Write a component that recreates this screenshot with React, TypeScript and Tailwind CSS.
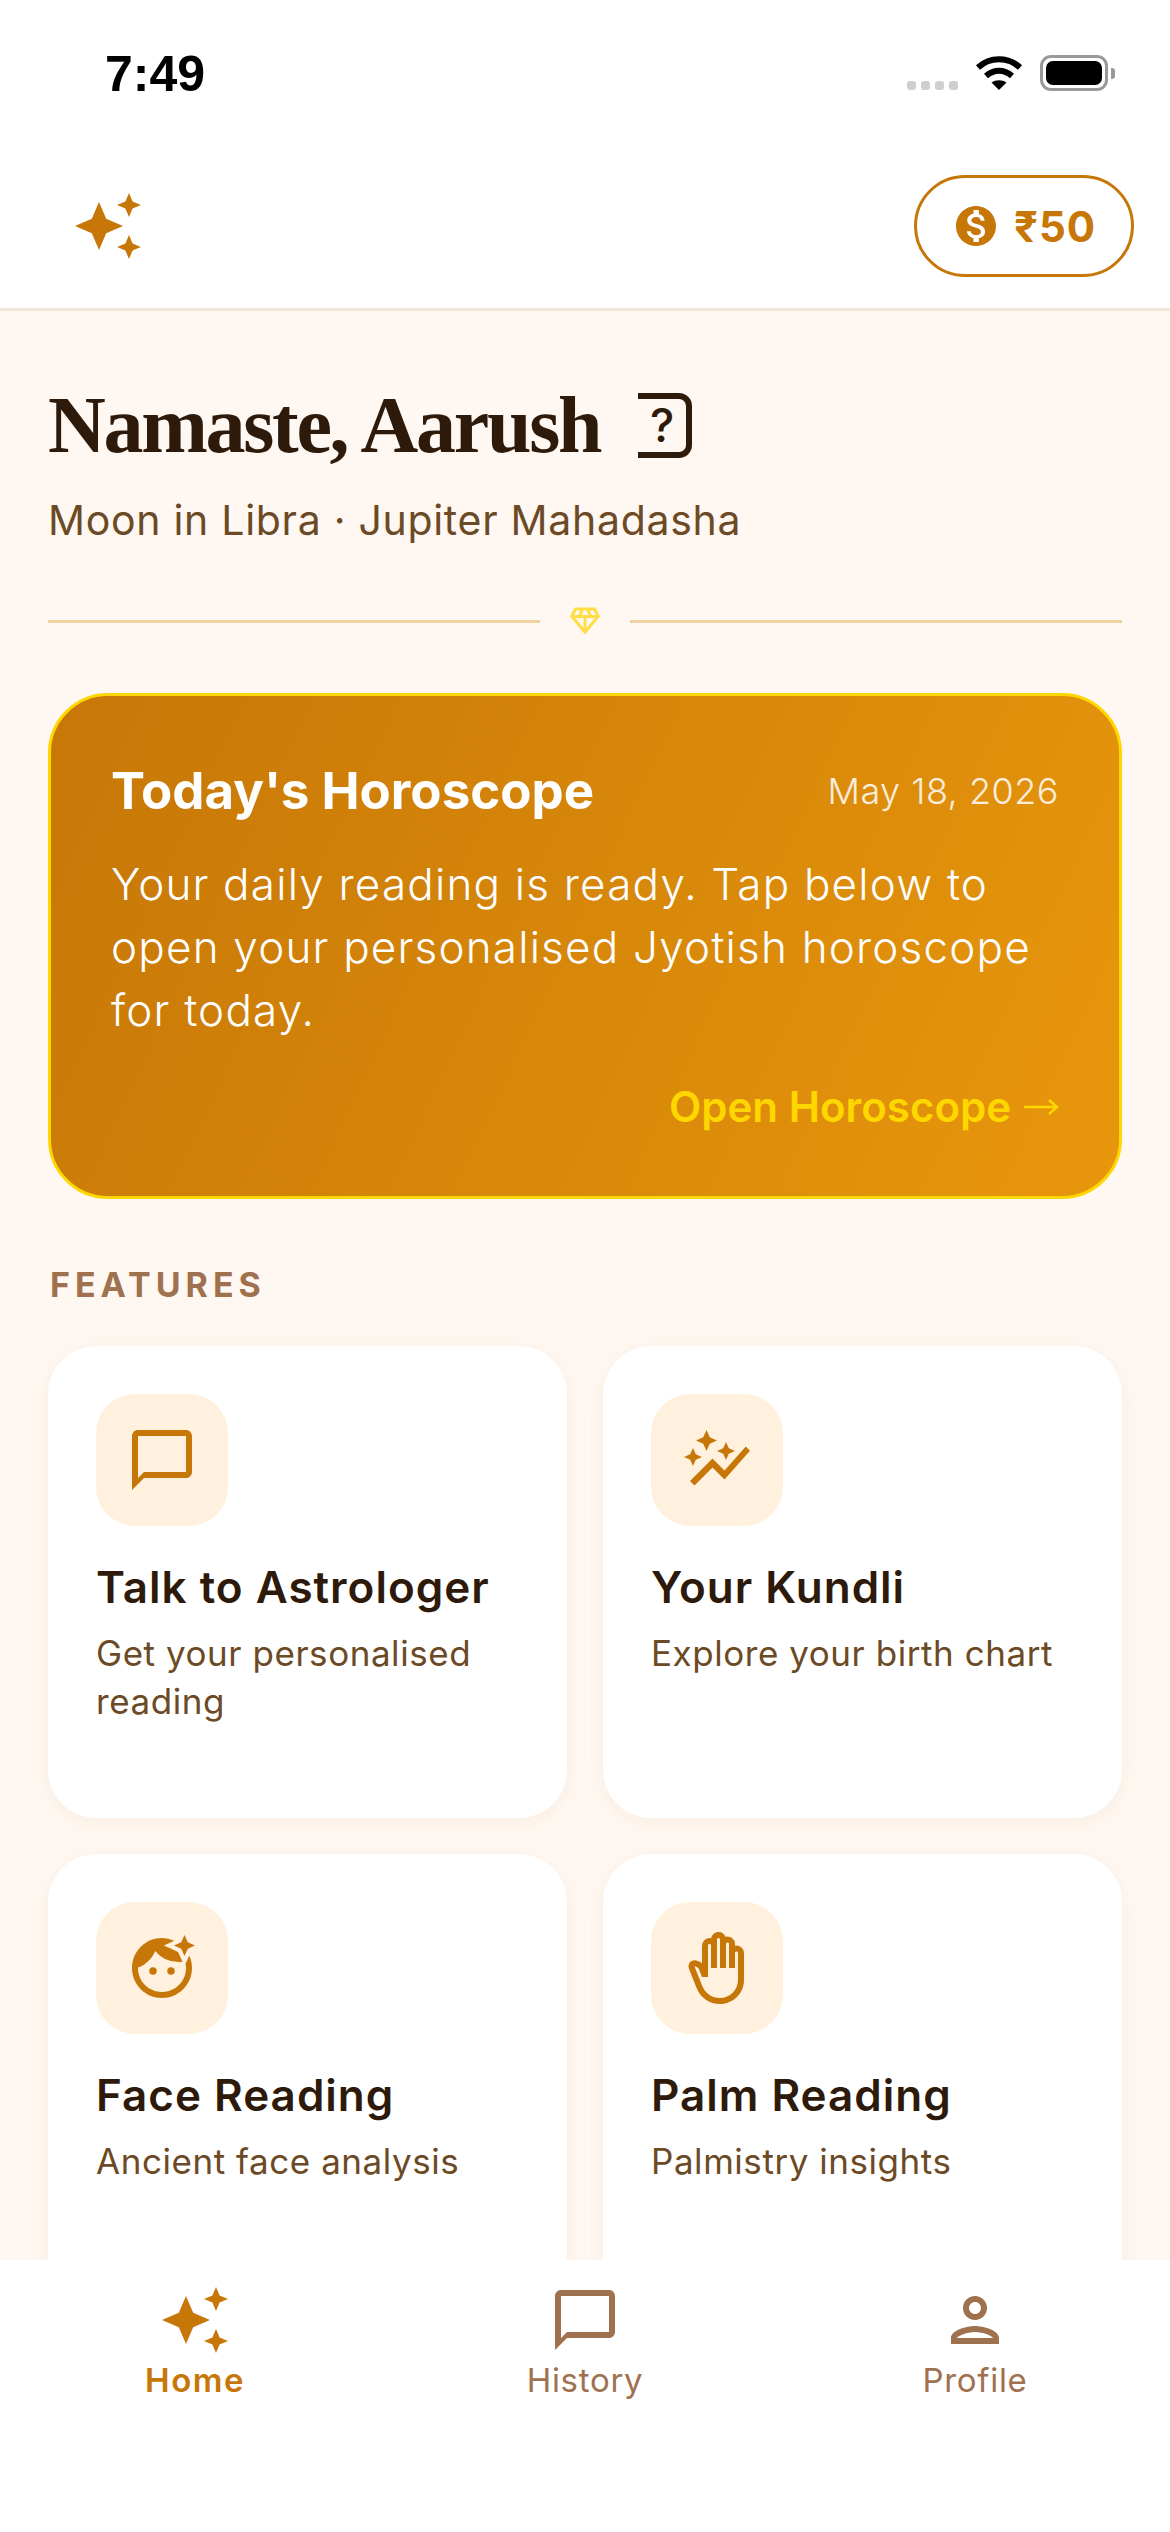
import {
    MdFaceRetouchingNatural,
    MdMonetizationOn,
    MdOutlineAutoGraph,
    MdOutlineBackHand,
    MdOutlineChatBubbleOutline,
    MdOutlineDiamond,
    MdOutlinePerson,
} from "react-icons/md";
import type { ComponentType, ReactNode } from "react";

const sans = "font-['Inter','Liberation_Sans',sans-serif]";

// four point star centred on cx, cy
function star(cx: number, cy: number, r: number) {
    const k = r * 0.3;
    return `M${cx} ${cy - r}L${cx + k} ${cy - k}L${cx + r} ${cy}L${cx + k} ${cy + k}L${cx} ${cy + r}L${cx - k} ${cy + k}L${cx - r} ${cy}L${cx - k} ${cy - k}Z`;
}

function Sparkles({ className }: { className?: string }) {
    return (
        <svg viewBox="0 0 72 72" className={className} fill="currentColor">
            <path d={star(27, 36, 24)} />
            <path d={star(57, 15, 12)} />
            <path d={star(57, 57, 12)} />
        </svg>
    );
}

function StatusBar() {
    return (
        <div className="h-[144px] bg-white flex items-start justify-between pl-[105px] pr-[55px]">
            <span className="mt-[45px] text-[50px] leading-[58px] font-semibold text-black font-['Liberation_Sans',sans-serif]">7:49</span>
            <div className="flex items-end gap-[17px] mt-[55px]">
                <div className="flex gap-[5px] mb-[1px]">
                    <div className="size-[9px] rounded-[3px] bg-[#cfcfcf]" />
                    <div className="size-[9px] rounded-[3px] bg-[#cfcfcf]" />
                    <div className="size-[9px] rounded-[3px] bg-[#cfcfcf]" />
                    <div className="size-[9px] rounded-[3px] bg-[#cfcfcf]" />
                </div>
                <svg viewBox="0 0 48 36" className="w-[48px] h-[36px]" fill="none" stroke="#000" strokeWidth="6">
                    <path d="M3 12.5C15 1.5 33 1.5 45 12.5" />
                    <path d="M11 21C19 14 29 14 37 21" />
                    <path d="M24 35L16.5 27.5C21 24.5 27 24.5 31.5 27.5Z" fill="#000" stroke="none" />
                </svg>
                <div className="flex items-center gap-[3px]">
                    <div className="w-[68px] h-[36px] rounded-[11px] border-[3px] border-[#999] p-[3px]">
                        <div className="size-full rounded-[7px] bg-black" />
                    </div>
                    <div className="w-[4px] h-[11px] rounded-r-[3px] bg-[#999]" />
                </div>
            </div>
        </div>
    );
}

function Feature({ icon: Icon, title, desc }: { icon: ComponentType<{ size?: number }>; title: string; desc: string }) {
    return (
        <div className="h-[472px] rounded-[48px] bg-white pt-[48px] px-[48px] shadow-[0_4px_24px_rgba(150,90,30,0.07)]">
            <div className="size-[132px] rounded-[39px] bg-[#FFF1DE] text-[#C77708] flex items-center justify-center">
                <Icon size={72} />
            </div>
            <h3 className="mt-[31px] text-[44px] leading-[60px] font-semibold text-[#2E1A0A] tracking-[1px]">{title}</h3>
            <p className="mt-[12px] text-[35px] leading-[48px] text-[#6B4A25] tracking-[0.55px]">{desc}</p>
        </div>
    );
}

function NavItem({ label, active, children }: { label: string; active?: boolean; children: ReactNode }) {
    return (
        <div className={`flex flex-col items-center ${active ? "text-[#C77708]" : "text-[#A0714F]"}`}>
            {children}
            <span className={`text-[33px] leading-[48px] ${active ? "font-semibold tracking-[1.5px]" : "font-normal tracking-[0.7px]"}`}>{label}</span>
        </div>
    );
}

export default function App() {
    return (
        <div className={`w-[1170px] h-[2532px] flex flex-col overflow-hidden bg-[#FFF8F2] ${sans}`}>
            <StatusBar />

            {/* --- HEADER --- */}
            <header className="h-[167px] shrink-0 bg-white border-b-[3px] border-[#F2E6D8] flex items-center justify-between pl-[72px] pr-[36px]">
                <Sparkles className="size-[72px] text-[#C77708]" />
                <div className="h-[102px] w-[220px] rounded-full border-[3px] border-[#C77708] text-[#C77708] flex items-center justify-center gap-[14px]">
                    <MdMonetizationOn size={48} />
                    <span className="text-[42px] font-bold tracking-[1px]">₹50</span>
                </div>
            </header>

            <main className="flex-1 min-h-0 overflow-hidden px-[48px] pt-[66px]">
                <div className="flex items-center gap-[38px] h-[96px]">
                    <h1 className="text-[80px] leading-[96px] font-bold text-[#2E1A0A] font-['Liberation_Serif',serif] tracking-[-2.3px]">Namaste, Aarush</h1>
                    <div className="w-[54px] h-[65px] border-y-[6px] border-r-[6px] border-[#2E1A0A] rounded-r-[13px] flex items-center justify-center text-[46px] font-medium text-[#2E1A0A]">?</div>
                </div>
                <p className="mt-[17px] text-[41px] leading-[60px] text-[#6B4A25] tracking-[0.7px]">Moon in Libra · Jupiter Mahadasha</p>

                <div className="mt-[53px] flex items-center gap-[27px]">
                    <div className="flex-1 h-[3px] bg-[#EFD3A0]" />
                    <MdOutlineDiamond size={36} className="text-[#FFDD44]" />
                    <div className="flex-1 h-[3px] bg-[#EFD3A0]" />
                </div>

                {/* --- HOROSCOPE CARD --- */}
                <section className="mt-[54px] h-[506px] rounded-[60px] border-[3px] border-[#FFD700] bg-[linear-gradient(115deg,#C67707,#E8970C)] px-[60px] pt-[59px] text-white">
                    <div className="flex items-center justify-between h-[72px]">
                        <h2 className="text-[51px] font-bold">Today's Horoscope</h2>
                        <span className="text-[36px] font-light text-white/85 tracking-[0.5px]">May 18, 2026</span>
                    </div>
                    <p className="mt-[26px] text-[44px] leading-[63px] font-light tracking-[1.2px]">
                        Your daily reading is ready. Tap below to open your personalised Jyotish horoscope for today.
                    </p>
                    <div className="mt-[35px] flex items-center justify-end gap-[12px] text-[#FFD700]">
                        <span className="text-[42px] leading-[60px] font-semibold">Open Horoscope</span>
                        <svg viewBox="0 0 36 18" className="w-[36px] h-[18px]" fill="none" stroke="currentColor" strokeWidth="2.5">
                            <path d="M1 9H34M26 2L34 9L26 16" />
                        </svg>
                    </div>
                </section>

                <h4 className="mt-[62px] pl-[2px] text-[34px] leading-[48px] font-bold tracking-[5px] text-[#A0714F]">FEATURES</h4>

                <div className="mt-[37px] grid grid-cols-2 gap-[36px]">
                    <Feature icon={MdOutlineChatBubbleOutline} title="Talk to Astrologer" desc="Get your personalised reading" />
                    <Feature icon={MdOutlineAutoGraph} title="Your Kundli" desc="Explore your birth chart" />
                    <Feature icon={MdFaceRetouchingNatural} title="Face Reading" desc="Ancient face analysis" />
                    <Feature icon={MdOutlineBackHand} title="Palm Reading" desc="Palmistry insights" />
                </div>
            </main>

            {/* --- BOTTOM NAV --- */}
            <nav className="h-[272px] shrink-0 bg-white grid grid-cols-3 pt-[24px] items-start">
                <NavItem label="Home" active>
                    <Sparkles className="size-[72px]" />
                </NavItem>
                <NavItem label="History">
                    <MdOutlineChatBubbleOutline size={72} />
                </NavItem>
                <NavItem label="Profile">
                    <MdOutlinePerson size={72} />
                </NavItem>
            </nav>
        </div>
    );
}
